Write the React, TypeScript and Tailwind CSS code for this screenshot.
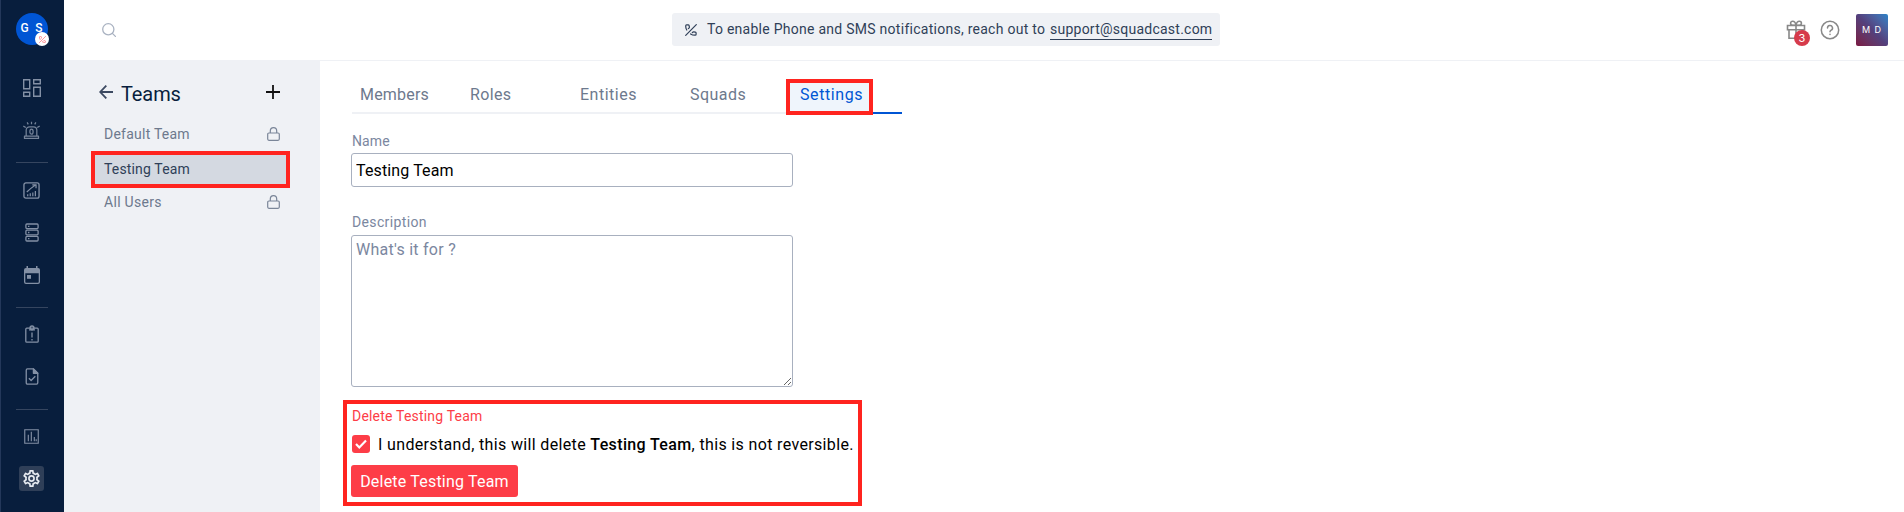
import React from "react";

type IconProps = { className?: string };

const SlashedPhone = ({ className }: IconProps) => (
  <svg viewBox="0 0 12 12" className={className} fill="none" stroke="currentColor" strokeWidth="1.2" strokeLinecap="round" strokeLinejoin="round">
    <path d="M11.3.7.7 11.3M1.8 6C.9 4.500.6 3 .8 1.500c.1-.5.5-.7 1-.7h1.400c.5 0 .8.3.9.8l.3 1.500c.1.6-.2 1-1 1.500M5.600 9.900c1.300.9 2.900 1.400 4.600 1.300.5 0 .9-.3.9-.9V9c0-.5-.3-.8-.8-.9l-1.500-.3c-.6-.1-1 .2-1.500.9" />
  </svg>
);

const DashboardIcon = ({ className }: IconProps) => (
  <svg viewBox="0 0 20 20" className={className} fill="none" stroke="currentColor" strokeWidth="1.4">
    <path d="M1.7 1.7h6v9h-6zM11.7 1.7h6.6v4h-6.6zM1.7 14.3h6v4h-6zM11.7 9.3h6.6v9h-6.6z" />
  </svg>
);

const SirenIcon = ({ className }: IconProps) => (
  <svg viewBox="0 0 20 20" className={className} fill="none" stroke="currentColor" strokeWidth="1.300" strokeLinejoin="round">
    <path d="M4.4 16V9.6C4.4 7.5 6 6.2 8 6.2h4c2 0 3.6 1.3 3.6 3.4V16M2.6 18.4V16h14.8v2.4zM10 .8v2.600M5.4 1.4l1.2 2.2M14.6 1.4l-1.2 2.2M1.4 5.4l2.600 1.4M18.6 5.4 16 6.8" />
    <ellipse cx="10" cy="11.2" rx="1.7" ry="2.6" />
  </svg>
);

const ChartArrowIcon = ({ className }: IconProps) => (
  <svg viewBox="0 0 18 18" className={className} fill="none" stroke="currentColor" strokeWidth="1.4">
    <rect x="1" y="1" width="16" height="16" rx="2" />
    <path d="m4 10.5 4-3.5 5.5-4M9.8 3h4v3.6" strokeWidth="1.3" />
    <path d="M5 15v-2M7.7 15v-3M10.4 15v-4M13.1 15V9.5" strokeWidth="1.3" />
  </svg>
);

const ServerIcon = ({ className }: IconProps) => (
  <svg viewBox="0 0 14 19" className={className} fill="none" stroke="currentColor" strokeWidth="1.3">
    <rect x=".9" y="1" width="12.2" height="4.6" rx="1" />
    <rect x=".9" y="7.2" width="12.2" height="4.6" rx="1" />
    <rect x=".9" y="13.4" width="12.2" height="4.6" rx="1" />
    <path d="M3 3.3h1.4M3 9.5h1.4M3 15.7h1.4" />
  </svg>
);

const CalendarIcon = ({ className }: IconProps) => (
  <svg viewBox="0 0 16 18" className={className} fill="currentColor">
    <path fillRule="evenodd" d="M2.5 0H4v2h8V0h1.500v2H14a2 2 0 0 1 2 2v12a2 2 0 0 1-2 2H2a2 2 0 0 1-2-2V4a2 2 0 0 1 2-2h.5zM1.300 7.300V16a.8.8 0 0 0 .8.8h11.800a.8.8 0 0 0 .8-.8V7.300z" />
    <path d="M3 9h4v3.800H3z" />
  </svg>
);

const ClipboardIcon = ({ className }: IconProps) => (
  <svg viewBox="0 0 14 18" className={className} fill="none" stroke="currentColor" strokeWidth="1.3">
    <rect x=".8" y="3.200" width="12.400" height="14" rx="1" />
    <circle cx="7" cy="2.800" r="1.900" strokeWidth="1.500" />
    <path d="M4 4.800h6M7 7.500v5M7 14v1.500" />
  </svg>
);

const FileCheckIcon = ({ className }: IconProps) => (
  <svg viewBox="0 0 14 18" className={className} fill="none" stroke="currentColor" strokeWidth="1.400" strokeLinejoin="round">
    <path d="M8.500 1H2.200A1.300 1.300 0 0 0 .9 2.300v13.400A1.300 1.300 0 0 0 2.200 17h9.600a1.300 1.300 0 0 0 1.300-1.300V5.600z" />
    <path d="M8.500 1v4.600h4.600z" fill="currentColor" />
    <path d="m3.700 10.800 2.400 2.400 4.400-4.400" />
  </svg>
);

const BarsIcon = ({ className }: IconProps) => (
  <svg viewBox="0 0 16 16" className={className} fill="none" stroke="currentColor" strokeWidth="1.200">
    <path d="M.8.8h14.400v14.400H.8zM4.600 13V6M7.800 13V3M11 13V8.500M13 13v-2" />
  </svg>
);

const GearIcon = ({ className }: IconProps) => (
  <svg viewBox="2 2 20 20" className={className} fill="currentColor">
    <path d="M19.430 12.980c.04-.32.07-.64.07-.98s-.03-.66-.07-.98l2.110-1.650a.5.5 0 0 0 .12-.64l-2-3.460a.5.5 0 0 0-.61-.22l-2.490 1a7.300 7.300 0 0 0-1.690-.98l-.38-2.650A.49.49 0 0 0 14 2h-4a.49.49 0 0 0-.49.42l-.38 2.650c-.61.25-1.170.59-1.690.98l-2.490-1a.5.5 0 0 0-.61.22l-2 3.460a.49.49 0 0 0 .12.64l2.110 1.650a7.900 7.900 0 0 0 0 1.960l-2.110 1.650a.5.5 0 0 0-.12.64l2 3.460c.12.22.39.3.61.22l2.490-1c.52.4 1.080.73 1.690.98l.38 2.650c.03.24.24.42.49.42h4c.25 0 .46-.18.49-.42l.38-2.650c.61-.25 1.170-.59 1.690-.98l2.490 1c.23.09.49 0 .61-.22l2-3.460a.5.5 0 0 0-.12-.64zm-1.980-1.710c.04.31.05.52.05.73s-.02.43-.05.73l-.14 1.130.89.7 1.080.84-.7 1.210-1.270-.51-1.040-.42-.9.68c-.43.32-.84.56-1.250.73l-1.060.43-.16 1.130-.2 1.350h-1.400l-.19-1.350-.16-1.130-1.060-.43c-.43-.18-.83-.41-1.230-.71l-.91-.7-1.060.43-1.270.51-.7-1.210 1.080-.84.89-.7-.14-1.130A8 8 0 0 1 6.500 12c0-.2.02-.43.05-.73l.14-1.130-.89-.7-1.080-.84.7-1.210 1.270.51 1.040.42.9-.68c.43-.32.84-.56 1.250-.73l1.060-.43.16-1.130.2-1.350h1.390l.19 1.350.16 1.130 1.060.43c.43.18.83.41 1.230.71l.91.7 1.060-.43 1.270-.51.7 1.210-1.070.85-.89.7zM12 8a4 4 0 1 0 0 8 4 4 0 0 0 0-8m0 6a2 2 0 1 1 0-4 2 2 0 0 1 0 4" />
  </svg>
);

const LockIcon = () => (
  <svg viewBox="0 0 13 14" className="-mt-px h-[14px] w-[13px]" fill="none" stroke="#7b8699" strokeWidth="1.200">
    <rect x=".7" y="6" width="11.600" height="7.300" rx="1.200" />
    <path d="M3.300 6V3.900a3.200 3.200 0 0 1 6.400 0V6" />
  </svg>
);

const GiftIcon = () => (
  <svg viewBox="0 0 20 20" className="h-5 w-5" fill="none" stroke="#888888" strokeWidth="1.600">
    <path d="M1.500 5.500h17v4.300h-17zM3 9.800v8.400h14V9.800M10 5.500v12.700" />
    <path d="M10 5.300C9.600 2.600 8.300 1.200 6.600 1.200a2 2 0 0 0-2 2c0 1.300.9 2.100 2.200 2.100zM10 5.300c.4-2.700 1.700-4.100 3.400-4.100a2 2 0 0 1 2 2c0 1.300-.9 2.100-2.200 2.100z" />
  </svg>
);

const Slot = ({ children, className }: { children: React.ReactNode; className: string }) => (
  <div className={`flex w-full shrink-0 items-center justify-center pr-px ${className}`}>{children}</div>
);

function Sidebar() {
  return (
    <nav className="flex h-full w-16 shrink-0 flex-col items-center border-l border-[#24385a] bg-[#081e3d] pr-px text-[#8390a5]">
      <div className="relative mt-[13px] flex h-8 w-8 shrink-0 items-center justify-center rounded-full bg-[#0055d4] text-[12px] font-medium tracking-[1.8px] text-white">
        <span className="-mt-[2px] pl-px">G S</span>
        <span className="absolute -bottom-px -right-px flex h-[14px] w-[14px] items-center justify-center rounded-full bg-white text-[#fd6a72]">
          <SlashedPhone className="h-[7px] w-[7px]" />
        </span>
      </div>
      <Slot className="mt-[33px] h-5"><DashboardIcon className="h-5 w-5" /></Slot>
      <Slot className="mt-[22px] h-5"><SirenIcon className="h-[19px] w-[19px] opacity-90" /></Slot>
      <div className="mt-[22px] h-px w-8 shrink-0 bg-[#35455f]" />
      <Slot className="mt-[18px] h-[18px]"><ChartArrowIcon className="h-[17px] w-[17px]" /></Slot>
      <Slot className="mt-6 h-[19px]"><ServerIcon className="h-[19px] w-[14px]" /></Slot>
      <Slot className="mt-6 h-[18px]"><CalendarIcon className="h-[18px] w-4" /></Slot>
      <div className="mt-[23px] h-px w-8 shrink-0 bg-[#35455f]" />
      <Slot className="mt-[17px] h-[18px]"><ClipboardIcon className="h-[18px] w-[14px]" /></Slot>
      <Slot className="mt-[25px] h-[17px]"><FileCheckIcon className="h-[17px] w-[14px]" /></Slot>
      <div className="mt-6 h-px w-8 shrink-0 bg-[#35455f]" />
      <Slot className="mt-[18px] h-4"><BarsIcon className="h-[15px] w-[15px]" /></Slot>
      <div className="mt-[22px] -ml-px flex h-[25px] w-[25px] shrink-0 items-center justify-center rounded-[3px] bg-[#2f3f58] text-[#e6eaf0]">
        <GearIcon className="h-[17px] w-[17px]" />
      </div>
    </nav>
  );
}

function TopBar() {
  return (
    <header className="flex h-[61px] shrink-0 items-center border-b border-[#eff1f5] bg-white">
      <svg viewBox="0 0 14 14" className="ml-[38px] h-[14px] w-[14px]" fill="none" stroke="#a9b2c1" strokeWidth="1.300" strokeLinecap="round">
        <circle cx="6.300" cy="6.300" r="5.600" />
        <path d="m10.400 10.400 3 3" />
      </svg>
      <div className="ml-[556px] -mt-px flex h-[33px] w-[548px] items-center rounded-[3px] bg-[#eff1f5] pl-[13px] text-[14px] text-[#2f3f58]">
        <SlashedPhone className="h-3 w-3" />
        <span className="ml-[10px] w-[343px] whitespace-nowrap tracking-[0.265px]">To enable Phone and SMS notifications, reach out to</span>
        <span className="mt-px h-[19px] whitespace-nowrap border-b border-[#2f3f58] leading-[17px] tracking-[0.24px]">support@squadcast.com</span>
      </div>
      <div className="ml-auto flex items-center pr-4">
        <div className="relative">
          <GiftIcon />
          <span className="absolute -bottom-[6px] -right-[4px] flex h-4 w-4 items-center justify-center rounded-full bg-[#d63b4b] font-[Inter] text-[11px] text-white">3</span>
        </div>
        <svg viewBox="0 0 20 20" className="ml-[14px] h-5 w-5" fill="none" stroke="#888888" strokeWidth="1.500" strokeLinecap="round">
          <circle cx="10" cy="10" r="8.700" />
          <path d="M7.500 8a2.500 2.500 0 1 1 3.700 2.200c-.8.5-1.200.8-1.200 1.600M10 14.300v.1" />
        </svg>
        <div className="ml-4 flex h-8 w-8 items-center justify-center rounded-[2px] bg-linear-to-tr from-[#7a1542] via-[#53407c] to-[#2583c8] font-[Inter] text-[9px] tracking-[1px] text-white">M D</div>
      </div>
    </header>
  );
}

function TeamsPanel() {
  return (
    <aside className="-mt-px flex w-64 shrink-0 flex-col bg-[#eff1f5] text-[14px] text-[#6d798d]">
      <div className="mt-5 flex h-[26px] items-center pl-[35px] pr-10 text-[20px] text-[#081e3d]">
        <svg viewBox="0 0 14 14" className="-mt-[2px] h-[14px] w-[14px]" fill="none" stroke="#3c4961" strokeWidth="1.800">
          <path d="M14 7H1.300M7.300.6 1.200 7l6.100 6.400" />
        </svg>
        <span className="ml-2 mt-px tracking-[-0.1px]">Teams</span>
        <svg viewBox="0 0 14 14" className="ml-auto -mt-[2px] h-[14px] w-[14px]" stroke="#111111" strokeWidth="1.800">
          <path d="M7 0v14M0 7h14" />
        </svg>
      </div>
      <div className="mt-[11px] flex h-[34px] items-center justify-between pl-10 pr-10">
        <span className="mt-px tracking-[0.24px]">Default Team</span>
        <LockIcon />
      </div>
      <div className="ml-[27px] flex h-[37px] w-[199px] items-center border-4 border-[#ff241f] bg-[#d4d9e1] pl-[9px] text-[#2f3f58]">
        <span className="-mt-px tracking-[0.15px]">Testing Team</span>
      </div>
      <div className="-mt-px flex h-[30px] items-center justify-between pl-10 pr-10">
        <span className="mt-px tracking-[0.3px]">All Users</span>
        <LockIcon />
      </div>
    </aside>
  );
}

const tabs = [
  { name: "Members", tracking: "tracking-[0.2px]" },
  { name: "Roles", tracking: "tracking-[0.36px]" },
  { name: "Entities", tracking: "tracking-[0.5px]" },
  { name: "Squads", tracking: "tracking-[0.45px]" },
];

function SettingsForm() {
  return (
    <main className="flex flex-1 flex-col items-start bg-white pl-[23px]">
      <div className="mt-[18px] ml-[9px] flex h-9 w-[550px] text-[16px] text-[#6d798d]">
        {tabs.map((tab) => (
          <div key={tab.name} className="flex h-[35px] w-[110px] items-center border-b-2 border-[#eff1f5] pl-2">
            <span className={`-mt-px ${tab.tracking}`}>{tab.name}</span>
          </div>
        ))}
        <div className="relative flex h-[35px] w-[110px] items-center border-b-2 border-[#0055d4] pl-2 text-[#0055d4]">
          <div className="absolute -left-[6px] top-0 h-9 w-[87px] border-4 border-[#ff241f] bg-[#eff5fc]" />
          <span className="relative -mt-px tracking-[0.6px]">Settings</span>
        </div>
      </div>

      <label className="ml-[9px] mt-[17px] h-[18px] text-[14px] leading-[18px] tracking-[0.1px] text-[#7b87a0]">Name</label>
      <input defaultValue="Testing Team" className="ml-2 mt-[3px] h-[34px] w-[442px] rounded-[3px] border border-[#a8b0bf] px-1 text-[16px] tracking-[0.13px] text-black outline-none" />

      <label className="ml-[9px] mt-[26px] h-[18px] text-[14px] leading-[18px] tracking-[0.36px] text-[#7b87a0]">Description</label>
      <textarea placeholder="What's it for ?" className="ml-2 mt-[4px] h-[152px] w-[442px] shrink-0 rounded-[3px] border border-[#a8b0bf] px-1 pt-[2px] text-[16px] tracking-[0.26px] outline-none placeholder:text-[#7b87a0]" />

      <section className="mt-[13px] flex h-[106px] w-[519px] shrink-0 flex-col items-start border-4 border-[#ff241f] pl-1">
        <h3 className="ml-px mt-[3px] h-[18px] text-[14px] leading-[18px] tracking-[0.2px] text-[#fd3d47]">Delete Testing Team</h3>
        <div className="ml-px mt-[9px] flex h-5 items-center whitespace-nowrap text-[16px] text-black">
          <span className="flex h-[18px] w-[18px] items-center justify-center rounded-[3px] bg-[#fd3d47]">
            <svg viewBox="0 0 12 10" className="h-[10px] w-3" fill="none" stroke="white" strokeWidth="2.200"><path d="m1 5 3.300 3.400L11 1.500" /></svg>
          </span>
          <span className="ml-2 mt-px tracking-[0.35px]">I understand, this will delete <b className="font-medium tracking-[0.36px]">Testing Team</b>, this is not reversible.</span>
        </div>
        <button className="mt-[11px] h-8 w-[167px] rounded-[3px] bg-[#fd3d47] pt-px text-[16px] tracking-[0.2px] text-white">Delete Testing Team</button>
      </section>
    </main>
  );
}

export default function App() {
  return (
    <div className="flex h-[512px] w-full overflow-hidden bg-white font-[Roboto,sans-serif]">
      <Sidebar />
      <div className="flex min-w-0 flex-1 flex-col">
        <TopBar />
        <div className="flex min-h-0 flex-1">
          <TeamsPanel />
          <SettingsForm />
        </div>
      </div>
    </div>
  );
}
